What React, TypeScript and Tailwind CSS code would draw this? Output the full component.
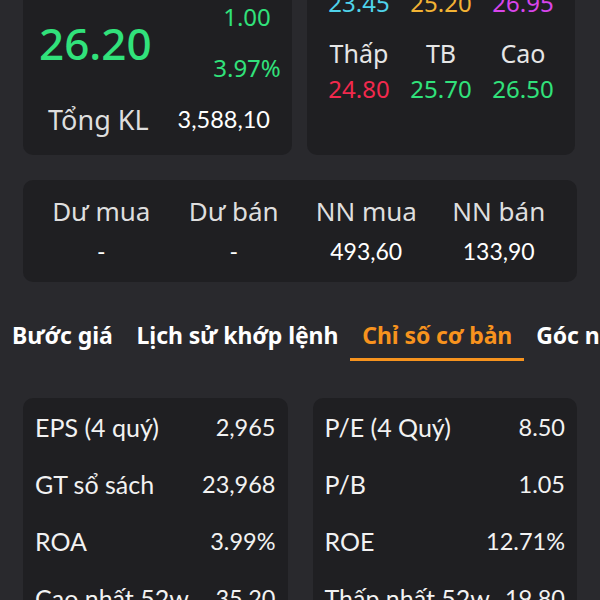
import React from 'react'

const UP = 'text-[#31e27b]'

const TOP_ROWS = [
  { labels: ['Sàn', 'TC', 'Trần'], values: [
    { v: '23.45', c: 'text-[#4fd3ea]' },
    { v: '25.20', c: 'text-[#f3b334]' },
    { v: '26.95', c: 'text-[#d845ea]' },
  ] },
  { labels: ['Thấp', 'TB', 'Cao'], values: [
    { v: '24.80', c: 'text-[#f1294d]' },
    { v: '25.70', c: UP },
    { v: '26.50', c: UP },
  ] },
]

const FLOWS = [
  { label: 'Dư mua', value: '-' },
  { label: 'Dư bán', value: '-' },
  { label: 'NN mua', value: '493,60' },
  { label: 'NN bán', value: '133,90' },
]

const TABS = ['Bước giá', 'Lịch sử khớp lệnh', 'Chỉ số cơ bản', 'Góc nhìn phân tích']

const LEFT_STATS = [
  ['EPS (4 quý)', '2,965'],
  ['GT sổ sách', '23,968'],
  ['ROA', '3.99%'],
  ['Cao nhất 52w', '35.20'],
]

const RIGHT_STATS = [
  ['P/E (4 Quý)', '8.50'],
  ['P/B', '1.05'],
  ['ROE', '12.71%'],
  ['Thấp nhất 52w', '19.80'],
]

const sans = "font-['Noto_Sans',sans-serif]"
const narrow = "font-['Lato',sans-serif]"

const StatCard = ({ rows }: { rows: string[][] }) => (
  <div className="rounded-[10px] bg-[#1f1f22] px-[12px] pt-[1px] pb-3">
    {rows.map(([label, value]) => (
      <div key={label} className="flex h-[57px] items-center justify-between text-[#f2f2f2]">
        <span className="text-[25px]">{label}</span>
        <span className="text-[23.5px]">{value}</span>
      </div>
    ))}
  </div>
)

export default function App() {
  return (
    <div className={`flex min-h-screen flex-col overflow-hidden bg-[#29292d] ${sans}`}>
      <div className="-mt-[67px] grid grid-cols-[269px_268px] gap-[15px] px-[23px]">
        <div className="rounded-[10px] bg-[#1f1f22] pt-[67px] pb-[18px]">
          <div className="flex h-[85px] items-center">
            <span className={`pl-[16px] text-[44px] font-medium leading-none ${UP}`}>26.20</span>
            <div className={`ml-auto flex w-[90px] flex-col gap-[17px] text-center text-[24px] leading-[34px] ${UP}`}>
              <span>1.00</span>
              <span>3.97%</span>
            </div>
          </div>
          <div className="mt-[18px] flex h-[34px] items-center">
            <span className="pl-[25px] text-[27px] text-[#dedede]">Tổng KL</span>
            <span className={`ml-auto mr-[22px] text-[23.5px] text-white ${narrow}`}>3,588,10</span>
          </div>
        </div>
        <div className="rounded-[10px] bg-[#1f1f22] px-[11px] pt-[16px]">
          {TOP_ROWS.map((row, i) => (
            <div key={i} className={`grid grid-cols-3 text-center ${i > 0 ? 'mt-[14px]' : ''}`}>
              {row.labels.map(l => (
                <span key={l} className="text-[25px] leading-[36px] text-[#e6e6e6]">{l}</span>
              ))}
              {row.values.map(v => (
                <span key={v.v} className={`text-[24px] leading-[36px] ${v.c}`}>{v.v}</span>
              ))}
            </div>
          ))}
        </div>
      </div>

      <div className="mx-[23px] mt-[25px] grid grid-cols-4 gap-y-[6px] rounded-[10px] bg-[#1f1f22] px-[12px] py-[14px] text-center">
        {FLOWS.map(f => (
          <span key={f.label} className="text-[26px] leading-[34px] text-[#dedede]">{f.label}</span>
        ))}
        {FLOWS.map(f => (
          <span key={f.label + 'v'} className={`text-[23px] leading-[34px] text-white ${narrow}`}>{f.value}</span>
        ))}
      </div>

      <div className="mt-[28px] flex overflow-hidden whitespace-nowrap">
        {TABS.map(t => {
          const active = t === 'Chỉ số cơ bản'
          return (
            <div key={t} className="flex shrink-0 flex-col px-[12px] pt-[10px]">
              <span className={`text-[23px] font-bold leading-[30px] tracking-[-0.1px] ${active ? 'text-[#f7931e]' : 'text-white'}`}>{t}</span>
              <span className={`mt-[8px] h-[3px] -mx-[12px] ${active ? 'bg-[#f7931e]' : ''}`} />
            </div>
          )
        })}
      </div>

      <div className={`mx-[23px] mt-[37px] grid grid-cols-2 gap-[25px] ${narrow}`}>
        <StatCard rows={LEFT_STATS} />
        <StatCard rows={RIGHT_STATS} />
      </div>
    </div>
  )
}
